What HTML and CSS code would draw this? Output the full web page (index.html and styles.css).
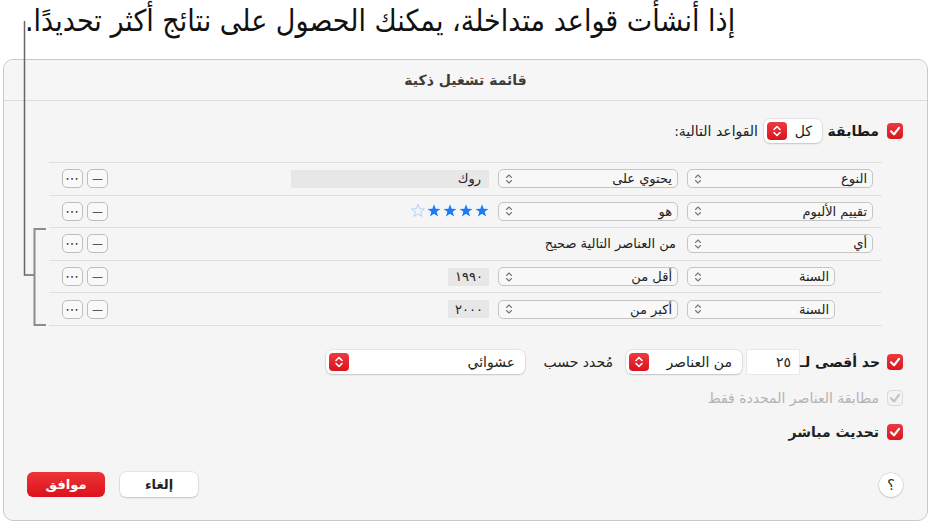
FILE: index.html
```html
<!DOCTYPE html>
<html lang="ar" dir="rtl">
<head>
  <meta charset="UTF-8">
  <title>قائمة تشغيل ذكية</title>
  <link rel="stylesheet" href="styles.css">
</head>
<body>

  <div class="callout">إذا أنشأت قواعد متداخلة، يمكنك الحصول على نتائج أكثر تحديدًا.</div>

  <div class="window">
    <div class="titlebar">قائمة تشغيل ذكية</div>

    <div class="content">
      <!-- Match row -->
      <div class="line match-row">
        <span class="check"><svg viewBox="0 0 16 16"><path d="M4 8.3 L7 11.3 L12 4.8" /></svg></span>
        <span class="label strong w-match">مطابقة</span>
        <span class="popup all">
          <span class="popup-text">كل</span>
          <span class="stepper"><svg viewBox="0 0 10 14"><path d="M2 5.5 L5 2.5 L8 5.5 M2 8.5 L5 11.5 L8 8.5" /></svg></span>
        </span>
        <span class="label w-rules">القواعد التالية:</span>
      </div>

      <!-- Rules -->
      <div class="rules">
        <div class="rule">
          <span class="select first">النوع<svg class="chev" viewBox="0 0 8 12"><path d="M1.5 4.5 L4 2 L6.5 4.5 M1.5 7.5 L4 10 L6.5 7.5" /></svg></span>
          <span class="select second">يحتوي على<svg class="chev" viewBox="0 0 8 12"><path d="M1.5 4.5 L4 2 L6.5 4.5 M1.5 7.5 L4 10 L6.5 7.5" /></svg></span>
          <span class="field wide">روك</span>
          <span class="spacer"></span>
          <span class="btn-sm">—</span>
          <span class="btn-sm dots">•••</span>
        </div>
        <div class="rule">
          <span class="select first">تقييم الألبوم<svg class="chev" viewBox="0 0 8 12"><path d="M1.5 4.5 L4 2 L6.5 4.5 M1.5 7.5 L4 10 L6.5 7.5" /></svg></span>
          <span class="select second">هو<svg class="chev" viewBox="0 0 8 12"><path d="M1.5 4.5 L4 2 L6.5 4.5 M1.5 7.5 L4 10 L6.5 7.5" /></svg></span>
          <span class="stars">
            <svg viewBox="0 0 14 14"><path d="M7 0.2 L8.65 4.73 L13.47 4.9 L9.66 7.87 L11 12.5 L7 9.8 L3 12.5 L4.34 7.87 L0.53 4.9 L5.35 4.73 Z" /></svg>
            <svg viewBox="0 0 14 14"><path d="M7 0.2 L8.65 4.73 L13.47 4.9 L9.66 7.87 L11 12.5 L7 9.8 L3 12.5 L4.34 7.87 L0.53 4.9 L5.35 4.73 Z" /></svg>
            <svg viewBox="0 0 14 14"><path d="M7 0.2 L8.65 4.73 L13.47 4.9 L9.66 7.87 L11 12.5 L7 9.8 L3 12.5 L4.34 7.87 L0.53 4.9 L5.35 4.73 Z" /></svg>
            <svg viewBox="0 0 14 14"><path d="M7 0.2 L8.65 4.73 L13.47 4.9 L9.66 7.87 L11 12.5 L7 9.8 L3 12.5 L4.34 7.87 L0.53 4.9 L5.35 4.73 Z" /></svg>
            <svg class="empty" viewBox="0 0 14 14"><path d="M7 0.2 L8.65 4.73 L13.47 4.9 L9.66 7.87 L11 12.5 L7 9.8 L3 12.5 L4.34 7.87 L0.53 4.9 L5.35 4.73 Z" /></svg>
          </span>
          <span class="spacer"></span>
          <span class="btn-sm">—</span>
          <span class="btn-sm dots">•••</span>
        </div>
        <div class="rule">
          <span class="select first">أي<svg class="chev" viewBox="0 0 8 12"><path d="M1.5 4.5 L4 2 L6.5 4.5 M1.5 7.5 L4 10 L6.5 7.5" /></svg></span>
          <span class="rule-text">من العناصر التالية صحيح</span>
          <span class="spacer"></span>
          <span class="btn-sm">—</span>
          <span class="btn-sm dots">•••</span>
        </div>
        <div class="rule nested">
          <span class="select first">السنة<svg class="chev" viewBox="0 0 8 12"><path d="M1.5 4.5 L4 2 L6.5 4.5 M1.5 7.5 L4 10 L6.5 7.5" /></svg></span>
          <span class="select second">أقل من<svg class="chev" viewBox="0 0 8 12"><path d="M1.5 4.5 L4 2 L6.5 4.5 M1.5 7.5 L4 10 L6.5 7.5" /></svg></span>
          <span class="field num">١٩٩٠</span>
          <span class="spacer"></span>
          <span class="btn-sm">—</span>
          <span class="btn-sm dots">•••</span>
        </div>
        <div class="rule nested">
          <span class="select first">السنة<svg class="chev" viewBox="0 0 8 12"><path d="M1.5 4.5 L4 2 L6.5 4.5 M1.5 7.5 L4 10 L6.5 7.5" /></svg></span>
          <span class="select second">أكبر من<svg class="chev" viewBox="0 0 8 12"><path d="M1.5 4.5 L4 2 L6.5 4.5 M1.5 7.5 L4 10 L6.5 7.5" /></svg></span>
          <span class="field num">٢٠٠٠</span>
          <span class="spacer"></span>
          <span class="btn-sm">—</span>
          <span class="btn-sm dots">•••</span>
        </div>
      </div>

      <!-- Limit row -->
      <div class="line limit-row">
        <span class="check"><svg viewBox="0 0 16 16"><path d="M4 8.3 L7 11.3 L12 4.8" /></svg></span>
        <span class="label strong w-limit">حد أقصى لـ</span>
        <span class="number-box">٢٥</span>
        <span class="popup items">
          <span class="popup-text">من العناصر</span>
          <span class="stepper"><svg viewBox="0 0 10 14"><path d="M2 5.5 L5 2.5 L8 5.5 M2 8.5 L5 11.5 L8 8.5" /></svg></span>
        </span>
        <span class="label w-by">مُحدد حسب</span>
        <span class="popup random">
          <span class="popup-text">عشوائي</span>
          <span class="stepper"><svg viewBox="0 0 10 14"><path d="M2 5.5 L5 2.5 L8 5.5 M2 8.5 L5 11.5 L8 8.5" /></svg></span>
        </span>
      </div>

      <div class="line option disabled">
        <span class="check off"><svg viewBox="0 0 16 16"><path d="M4 8.3 L7 11.3 L12 4.8" /></svg></span>
        <span class="label">مطابقة العناصر المحددة فقط</span>
      </div>

      <div class="line option live">
        <span class="check"><svg viewBox="0 0 16 16"><path d="M4 8.3 L7 11.3 L12 4.8" /></svg></span>
        <span class="label">تحديث مباشر</span>
      </div>

      <!-- Footer -->
      <div class="footer">
        <span class="help">؟</span>
        <span class="spacer"></span>
        <span class="btn cancel">إلغاء</span>
        <span class="btn ok">موافق</span>
      </div>
    </div>
  </div>

  <!-- Callout leader and bracket -->
  <svg class="leader" viewBox="0 0 931 524">
    <path class="lead" d="M24.5 21 V275 H34" />
    <path class="bracket" d="M46 229 H34.5 V325 H46" />
  </svg>

</body>
</html>
```

FILE: styles.css
```css
body {
  margin: 0;
  background: #fff;
  font-family: "DejaVu Sans", sans-serif;
  color: #222;
  width: 931px;
  height: 524px;
  position: relative;
  overflow: hidden;
}

.callout {
  text-align: left;
  padding: 4px 0 0 25px;
  height: 53px;
  box-sizing: border-box;
  font-family: "DejaVu Sans Condensed", "DejaVu Sans", sans-serif;
  font-size: 30px;
  line-height: 34px;
  color: #111;
  white-space: nowrap;
}

.window {
  margin: 6px 3px 0 3px;
  width: 925px;
  height: 462px;
  box-sizing: border-box;
  border: 1px solid #c9c9c9;
  border-radius: 10px;
  background: #f5f5f5;
  display: flex;
  flex-direction: column;
  overflow: hidden;
}

.titlebar {
  height: 40px;
  flex: none;
  border-bottom: 1px solid #dedede;
  background: #f6f6f6;
  display: flex;
  align-items: center;
  justify-content: center;
  font-weight: bold;
  font-size: 14px;
  color: #3c3c3c;
}

.content {
  flex: 1;
  display: flex;
  flex-direction: column;
  padding: 18px 24px 23px 23px;
}

.line {
  display: flex;
  align-items: center;
  font-size: 14px;
}

.match-row {
  height: 24px;
}

.label {
  white-space: nowrap;
}
.strong {
  font-weight: bold;
  color: #1a1a1a;
}
.w-match {
  width: 44px;
  margin-right: 8px;
}
.w-rules {
  margin-right: 6px;
}
.w-limit {
  width: 76px;
  margin-right: 7px;
}
.w-by {
  width: 79px;
  margin-right: 13px;
}

.check {
  width: 16px;
  height: 16px;
  border-radius: 4px;
  background: linear-gradient(#ec3a3f, #d9161f);
  display: inline-flex;
  flex: none;
}
.check svg {
  width: 16px;
  height: 16px;
  fill: none;
  stroke: #fff;
  stroke-width: 2.2;
  stroke-linecap: round;
  stroke-linejoin: round;
}
.check.off {
  background: #f3f3f3;
  border: 1px solid #dadada;
  box-sizing: border-box;
}
.check.off svg {
  stroke: #c2c2c2;
  margin: -1px;
}

.popup {
  display: inline-flex;
  align-items: center;
  justify-content: space-between;
  height: 24px;
  box-sizing: border-box;
  border-radius: 6px;
  background: #fff;
  box-shadow: 0 0 0 0.5px rgba(0,0,0,0.12), 0 1px 2px rgba(0,0,0,0.15);
  padding: 0 10px 0 3px;
  flex: none;
}
.popup.all {
  width: 58px;
  margin-right: 13px;
}
.popup.items {
  width: 116px;
  margin-right: 5px;
}
.popup.random {
  width: 199px;
  margin-right: 9px;
}
.popup-text {
  white-space: nowrap;
}
.stepper {
  width: 20px;
  height: 18px;
  border-radius: 4px;
  background: linear-gradient(#ee3a40, #d8141e);
  display: inline-flex;
  align-items: center;
  justify-content: center;
  flex: none;
}
.stepper svg {
  width: 10px;
  height: 14px;
  fill: none;
  stroke: #fff;
  stroke-width: 1.6;
  stroke-linecap: round;
  stroke-linejoin: round;
}

.rules {
  margin: 19px 21px 0 22px;
  border-top: 1px solid #e0e0e0;
}

.rule {
  height: 31.6px;
  border-bottom: 1px solid #e0e0e0;
  display: flex;
  align-items: center;
  padding: 0 9px 0 13px;
  font-size: 13px;
}

.select {
  height: 19px;
  box-sizing: border-box;
  border: 1px solid #c5c5c5;
  border-radius: 5px;
  background: #f8f8f8;
  display: flex;
  align-items: center;
  justify-content: space-between;
  padding: 0 5px 0 6px;
  flex: none;
  white-space: nowrap;
}
.select.first {
  width: 186px;
  margin-left: 9px;
}
.select.second {
  width: 180px;
  margin-left: 9px;
}
.nested .select.first {
  width: 148px;
  margin-right: 38px;
}
.chev {
  width: 8px;
  height: 12px;
  fill: none;
  stroke: #777;
  stroke-width: 1.1;
  stroke-linecap: round;
  stroke-linejoin: round;
}

.field {
  height: 18px;
  background: #e7e7e7;
  display: flex;
  align-items: center;
  padding: 0 8px;
  box-sizing: border-box;
  flex: none;
}
.field.wide {
  width: 198px;
}
.field.num {
  width: 41px;
  padding: 0 6px;
}

.stars {
  display: flex;
  gap: 2px;
  width: 79px;
  flex: none;
}
.stars svg {
  width: 14px;
  height: 14px;
  fill: #1a7cf6;
}
.stars svg.empty {
  fill: none;
  stroke: #a9cdfb;
  stroke-width: 0.9;
  stroke-linejoin: round;
}

.rule-text {
  white-space: nowrap;
  margin-right: 2px;
}

.spacer {
  flex: 1;
}

.btn-sm {
  width: 21px;
  height: 19px;
  box-sizing: border-box;
  border: 1px solid #bdbdbd;
  border-radius: 5px;
  background: #f9f9f9;
  display: flex;
  align-items: center;
  justify-content: center;
  font-size: 11px;
  color: #333;
  margin-right: 4px;
  flex: none;
}
.btn-sm.dots {
  font-size: 6px;
  letter-spacing: 1px;
  color: #222;
}

.limit-row {
  margin-top: 24px;
  height: 24px;
}
.number-box {
  width: 52px;
  height: 24px;
  box-sizing: border-box;
  background: #fff;
  box-shadow: 0 0 0 0.5px rgba(0,0,0,0.1);
  display: flex;
  align-items: center;
  padding: 0 8px;
  margin-right: 5px;
  flex: none;
}

.option {
  height: 18px;
  gap: 8px;
}
.disabled {
  margin-top: 15px;
  color: #b3b3b3;
}
.live {
  margin-top: 16px;
  font-weight: bold;
}

.footer {
  margin-top: auto;
  display: flex;
  align-items: center;
  gap: 15px;
}
.help {
  width: 24px;
  height: 24px;
  border-radius: 50%;
  background: #fff;
  box-shadow: 0 0 0 0.5px rgba(0,0,0,0.15), 0 1px 2px rgba(0,0,0,0.15);
  display: flex;
  align-items: center;
  justify-content: center;
  font-size: 15px;
  color: #333;
}
.btn {
  width: 78px;
  height: 25px;
  border-radius: 6px;
  display: flex;
  align-items: center;
  justify-content: center;
  font-size: 13px;
  font-weight: bold;
}
.cancel {
  background: #fff;
  box-shadow: 0 0 0 0.5px rgba(0,0,0,0.12), 0 1px 2px rgba(0,0,0,0.15);
  color: #222;
}
.ok {
  background: linear-gradient(#ec3439, #dd111b);
  color: #fff;
}

.leader {
  position: absolute;
  left: 0;
  top: 0;
  width: 931px;
  height: 524px;
  pointer-events: none;
}
.leader path {
  fill: none;
}
.lead {
  stroke: #666;
  stroke-width: 1.5;
}
.bracket {
  stroke: #8c8c8c;
  stroke-width: 2;
}
```
